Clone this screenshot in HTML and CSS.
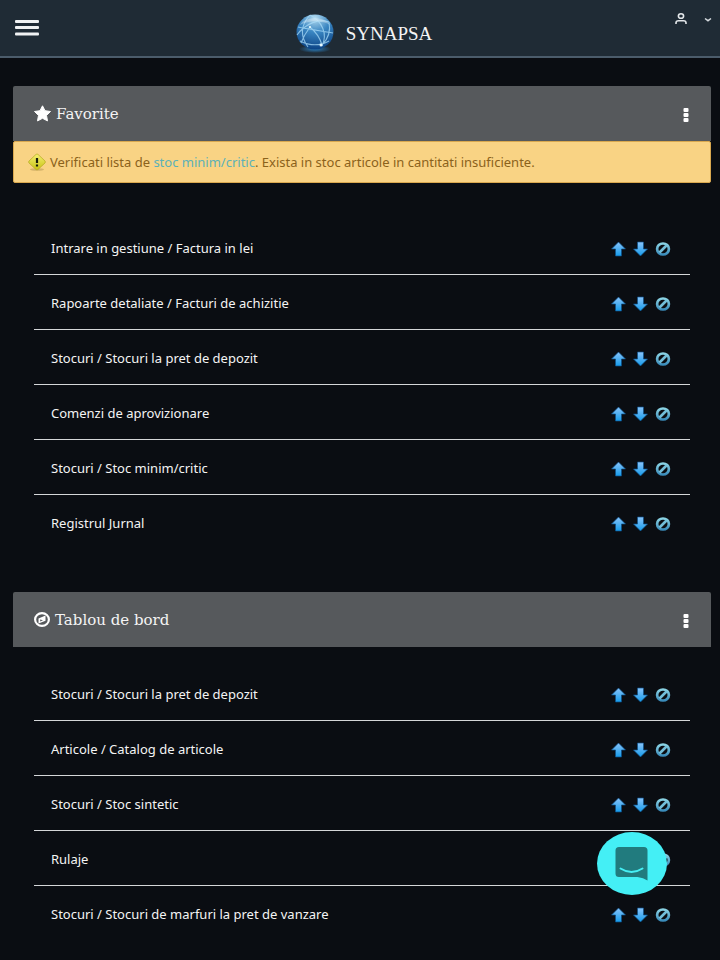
FILE: index.html
```html
<!DOCTYPE html>
<html lang="ro">
<head>
<meta charset="utf-8">
<meta name="viewport" content="width=device-width, initial-scale=1">
<title>Synapsa</title>
<link rel="stylesheet" href="styles.css">
</head>
<body>
<svg class="defs" aria-hidden="true">
  <defs>
    <linearGradient id="blue" x1="0" y1="0" x2="0" y2="1"><stop offset="0" stop-color="#8ac4fa"/><stop offset="1" stop-color="#159bea"/></linearGradient>
    <linearGradient id="teal" x1="0" y1="0" x2="0" y2="1"><stop offset="0" stop-color="#8ad3e4"/><stop offset="1" stop-color="#3b8dbc"/></linearGradient>
    <radialGradient id="globe" cx=".5" cy=".1" r=".9"><stop offset="0" stop-color="#b5dcf0"/><stop offset=".45" stop-color="#3a86c2"/><stop offset="1" stop-color="#0b4385"/></radialGradient>
    <radialGradient id="glow"><stop offset="0" stop-color="#2b7fc0"/><stop offset="1" stop-color="#2b7fc0" stop-opacity="0"/></radialGradient>
    <linearGradient id="warn" x1="0" y1="0" x2="0" y2="1"><stop offset="0" stop-color="#f4ee72"/><stop offset="1" stop-color="#c9c413"/></linearGradient>
  </defs>
  <symbol id="up" viewBox="0 0 16 16"><path d="M7.500 1 14.500 8h-4v7h-6V8h-4z" fill="url(#blue)" stroke="#0c4f86" stroke-width=".7"/></symbol>
  <symbol id="down" viewBox="0 0 16 16"><path d="M7.500 15 .5 8h4V1h6v7h4z" fill="url(#blue)" stroke="#0c4f86" stroke-width=".7"/></symbol>
  <symbol id="ban" viewBox="0 0 16 16"><ellipse cx="8" cy="8" rx="5.900" ry="5.500" fill="none" stroke="url(#teal)" stroke-width="2.700"/><path d="M4.500 11.500 11.500 4.500" stroke="#72bdd8" stroke-width="2.600"/></symbol>
  <symbol id="dots" viewBox="0 0 6 16"><rect x=".5" y="1" width="5" height="4" rx="1"/><rect x=".5" y="6" width="5" height="4" rx="1"/><rect x=".5" y="11" width="5" height="4" rx="1"/></symbol>
</svg>

<header class="topbar">
  <button class="icon-button menu" aria-label="Meniu">
    <svg width="24" height="18" viewBox="0 0 24 18" fill="#f0f2f3"><rect y="1" width="24" height="3" rx="1"/><rect y="7" width="24" height="3" rx="1"/><rect y="13.500" width="24" height="3" rx="1"/></svg>
  </button>
  <a class="brand" href="#">
    <svg width="40" height="40" viewBox="0 0 40 40">
      <ellipse cx="20" cy="36" rx="16" ry="4" fill="url(#glow)"/>
      <ellipse cx="20" cy="19" rx="18.500" ry="17.500" fill="url(#globe)"/>
      <g fill="none" stroke="#a9dcf8" stroke-width="1.100" opacity=".75">
        <path d="M15 2C5 13 5 23 13 34M15 2c12 6 18 19 12 31M2 22C10 11 24 5 34 9M3 14c10 2 24 4 35 6M6 30C9 22 12 18 15 14M15 14c6 5 10 11 12 18M5 28c10 5 20 5 29 0M34 9c2 10-2 18-7 23"/>
      </g>
      <g fill="#e9faff"><circle cx="26" cy="32" r="1.500"/><circle cx="15" cy="14" r="1.100"/></g>
      <path d="M5 12C9 3 31 3 35 12 27 7 14 7 5 12z" fill="#fff" opacity=".3"/>
    </svg>
    <span>SYNAPSA</span>
  </a>
  <button class="icon-button account" aria-label="Cont">
    <svg width="14" height="14" viewBox="0 0 14 14" fill="none" stroke="#e3e7ea" stroke-width="1.600"><ellipse cx="7" cy="4" rx="2.600" ry="2.300"/><path d="M2 12v-1.200C2 9.500 3 8.700 4.500 8.700h5c1.500 0 2.500.8 2.500 2.100V12"/></svg>
    <svg width="8" height="6" viewBox="0 0 8 6" fill="none" stroke="#d5dade" stroke-width="1.500"><path d="m1 2.500 3 2.200 3-2.200"/></svg>
  </button>
</header>

<main>
  <section class="panel">
    <div class="panel-head">
      <svg width="17" height="17" viewBox="0 0 17 17" fill="#fff"><path stroke="#fff" stroke-linejoin="round" d="m8.500.8 2.500 4.900 5.500.8-4 3.900 1 5.500-5-2.600-5 2.600 1-5.500-4-3.900 5.500-.8z"/></svg>
      <h2>Favorite</h2>
      <button class="icon-button more" aria-label="Optiuni"><svg width="6" height="16"><use href="#dots"/></svg></button>
    </div>
    <div class="alert">
      <svg width="18" height="18" viewBox="0 0 18 18"><ellipse cx="9" cy="16.500" rx="7" ry="1.300" fill="#a98c4c" opacity=".45"/><path d="M8 1.400q1-.8 2 0l7 6.600q.8 1 0 2l-7 6.500q-1 .8-2 0L1 10q-.8-1 0-2z" fill="url(#warn)" stroke="#b5a91f" stroke-width=".7"/><path d="M9 5v5M9 11.500v2" stroke="#171c0b" stroke-width="2.200"/></svg>
      <p>Verificati lista de <a href="#">stoc minim/critic</a>. Exista in stoc articole in cantitati insuficiente.</p>
    </div>
    <ul class="rows after-alert">
      <li><a href="#">Intrare in gestiune / Factura in lei</a><span class="actions"><button class="icon-button" aria-label="Sus"><svg><use href="#up"/></svg></button><button class="icon-button" aria-label="Jos"><svg><use href="#down"/></svg></button><button class="icon-button" aria-label="Elimina"><svg><use href="#ban"/></svg></button></span></li>
      <li><a href="#">Rapoarte detaliate / Facturi de achizitie</a><span class="actions"><button class="icon-button" aria-label="Sus"><svg><use href="#up"/></svg></button><button class="icon-button" aria-label="Jos"><svg><use href="#down"/></svg></button><button class="icon-button" aria-label="Elimina"><svg><use href="#ban"/></svg></button></span></li>
      <li><a href="#">Stocuri / Stocuri la pret de depozit</a><span class="actions"><button class="icon-button" aria-label="Sus"><svg><use href="#up"/></svg></button><button class="icon-button" aria-label="Jos"><svg><use href="#down"/></svg></button><button class="icon-button" aria-label="Elimina"><svg><use href="#ban"/></svg></button></span></li>
      <li><a href="#">Comenzi de aprovizionare</a><span class="actions"><button class="icon-button" aria-label="Sus"><svg><use href="#up"/></svg></button><button class="icon-button" aria-label="Jos"><svg><use href="#down"/></svg></button><button class="icon-button" aria-label="Elimina"><svg><use href="#ban"/></svg></button></span></li>
      <li><a href="#">Stocuri / Stoc minim/critic</a><span class="actions"><button class="icon-button" aria-label="Sus"><svg><use href="#up"/></svg></button><button class="icon-button" aria-label="Jos"><svg><use href="#down"/></svg></button><button class="icon-button" aria-label="Elimina"><svg><use href="#ban"/></svg></button></span></li>
      <li><a href="#">Registrul Jurnal</a><span class="actions"><button class="icon-button" aria-label="Sus"><svg><use href="#up"/></svg></button><button class="icon-button" aria-label="Jos"><svg><use href="#down"/></svg></button><button class="icon-button" aria-label="Elimina"><svg><use href="#ban"/></svg></button></span></li>
    </ul>
  </section>

  <section class="panel">
    <div class="panel-head">
      <svg width="16" height="16" viewBox="0 0 16 16"><ellipse cx="8" cy="7.500" rx="6.900" ry="6.400" fill="none" stroke="#fff" stroke-width="2.200"/><path fill="#fff" fill-rule="evenodd" d="M11.500 3.500v5.200L4.500 11.500V6.400zM6.200 7.400v2l2.800-1.100z"/></svg>
      <h2>Tablou de bord</h2>
      <button class="icon-button more" aria-label="Optiuni"><svg width="6" height="16"><use href="#dots"/></svg></button>
    </div>
    <ul class="rows">
      <li><a href="#">Stocuri / Stocuri la pret de depozit</a><span class="actions"><button class="icon-button" aria-label="Sus"><svg><use href="#up"/></svg></button><button class="icon-button" aria-label="Jos"><svg><use href="#down"/></svg></button><button class="icon-button" aria-label="Elimina"><svg><use href="#ban"/></svg></button></span></li>
      <li><a href="#">Articole / Catalog de articole</a><span class="actions"><button class="icon-button" aria-label="Sus"><svg><use href="#up"/></svg></button><button class="icon-button" aria-label="Jos"><svg><use href="#down"/></svg></button><button class="icon-button" aria-label="Elimina"><svg><use href="#ban"/></svg></button></span></li>
      <li><a href="#">Stocuri / Stoc sintetic</a><span class="actions"><button class="icon-button" aria-label="Sus"><svg><use href="#up"/></svg></button><button class="icon-button" aria-label="Jos"><svg><use href="#down"/></svg></button><button class="icon-button" aria-label="Elimina"><svg><use href="#ban"/></svg></button></span></li>
      <li><a href="#">Rulaje</a><span class="actions"><button class="icon-button" aria-label="Sus"><svg><use href="#up"/></svg></button><button class="icon-button" aria-label="Jos"><svg><use href="#down"/></svg></button><button class="icon-button" aria-label="Elimina"><svg><use href="#ban"/></svg></button></span></li>
      <li><a href="#">Stocuri / Stocuri de marfuri la pret de vanzare</a><span class="actions"><button class="icon-button" aria-label="Sus"><svg><use href="#up"/></svg></button><button class="icon-button" aria-label="Jos"><svg><use href="#down"/></svg></button><button class="icon-button" aria-label="Elimina"><svg><use href="#ban"/></svg></button></span></li>
    </ul>
  </section>
</main>

<button class="chat" aria-label="Chat">
  <svg width="34" height="36" viewBox="0 0 34 36"><path d="M4 1h25Q32.500 1 32.500 4.500V34.500q-4-3-10-3.500H4Q.5 31 .5 27.500v-23Q.5 1 4 1z" fill="#217b7e"/><path d="M5.500 22.500q11 7 22 0" fill="none" stroke="#45eff4" stroke-width="2" stroke-linecap="round"/></svg>
</button>
</body>
</html>
```
FILE: styles.css
```css
* { box-sizing: border-box; }

body {
  margin: 0;
  background: #0a0d12;
  color: #f4f4f4;
  font: 13px/20px "Noto Sans", sans-serif;
}

a { color: inherit; text-decoration: none; }

.defs { position: absolute; width: 0; height: 0; }

.icon-button {
  display: flex;
  align-items: center;
  padding: 0;
  border: 0;
  background: none;
  cursor: pointer;
}

.topbar {
  display: grid;
  grid-template-columns: 1fr auto 1fr;
  height: 58px;
  padding: 0 8px 0 15px;
  background: #1f2b35;
  border-bottom: 2px solid #4b5c6b;
}

.menu { justify-self: start; }

.brand {
  display: flex;
  align-items: center;
  gap: 11px;
  padding-top: 12px;
  font: 19px/24px "Liberation Serif", serif;
}

.brand svg { margin-bottom: 2px; }

.account {
  justify-self: end;
  align-self: start;
  gap: 16px;
  padding-top: 12px;
}

main { padding: 28px 9px 18px 13px; }

.panel + .panel { margin-top: 42px; }

.panel-head {
  display: flex;
  align-items: center;
  gap: 5px;
  height: 55px;
  padding: 0 22px 0 21px;
  background: #56595c;
  border-radius: 2px 2px 0 0;
}

.panel-head h2 {
  margin: 0;
  font: 15px/20px "DejaVu Serif", serif;
}

.more { margin-left: auto; padding-top: 2px; fill: #fff; }

.alert {
  display: flex;
  align-items: center;
  gap: 4px;
  min-height: 42px;
  padding: 0 14px;
  background: #f9d384;
  border: 1px solid #d9a84f;
  border-radius: 2px;
  color: #8b621b;
}

.alert p { margin: 0; }
.alert a { color: #5db1b8; }

.rows {
  margin: 0;
  padding: 19px 21px 0;
  list-style: none;
}

.rows.after-alert { padding-top: 37px; }

.rows li {
  display: flex;
  align-items: center;
  justify-content: space-between;
  height: 55px;
  padding: 2px 19px 0 17px;
  border-bottom: 1px solid #d4d6d8;
}

.rows li:last-child { border-bottom-color: transparent; }

.actions { display: flex; gap: 6px; padding-top: 2px; }
.actions svg { width: 16px; height: 16px; }

.chat {
  position: fixed;
  right: 53px;
  bottom: 65px;
  display: grid;
  place-items: center;
  width: 70px;
  height: 63px;
  padding: 0;
  border: 0;
  border-radius: 50%;
  background: #44eff5;
}
```
